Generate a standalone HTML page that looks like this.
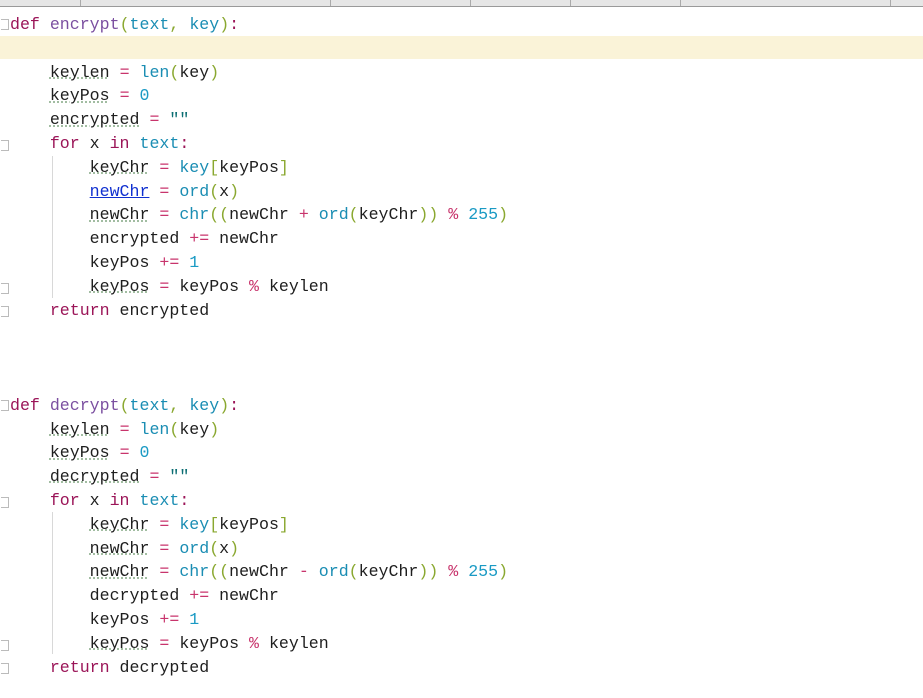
<!DOCTYPE html>
<html><head><meta charset="utf-8"><style>
body{margin:0;width:923px;height:698px;overflow:hidden;background:#fff;position:relative;font-family:"Liberation Mono","Noto Sans CJK SC",monospace;}
.top{position:absolute;left:0;top:0;width:923px;height:6px;background:#e6e6e6;border-bottom:1px solid #9a9a9a;}
.top i{position:absolute;top:0;width:1px;height:6px;background:#aaa}
.hl{position:absolute;left:0;top:36px;width:923px;height:23px;background:#faf3d8;}
.code{position:absolute;left:10px;top:13px;font-size:16.6px;line-height:23.8px;color:#1e1e1e;white-space:pre;}
.k{color:#9b1558}.f{color:#7b4fa0}.b{color:#1a8db3}.o{color:#c8346c}.n{color:#1a9ac4}.s{color:#0c6e73}.p{color:#8aa830}
.u{text-decoration:underline dotted #8fb08f}.a{color:#1030d0;text-decoration:underline solid #1030d0}
.g{position:absolute;left:52px;width:1px;background:#d8d8d8}
.fm{position:absolute;left:1px;width:7px;height:9px;border:1px solid #bbb;border-left:none;background:#fff}
</style></head><body>
<div class="top"><i style="left:80px"></i><i style="left:330px"></i><i style="left:470px"></i><i style="left:570px"></i><i style="left:680px"></i><i style="left:890px"></i></div>
<div class="hl"></div>
<div class="g" style="top:156px;height:142px"></div>
<div class="g" style="top:512px;height:142px"></div>
<div class="fm" style="top:19px"></div><div class="fm" style="top:140px"></div><div class="fm" style="top:283px"></div><div class="fm" style="top:306px"></div>
<div class="fm" style="top:400px"></div><div class="fm" style="top:497px"></div><div class="fm" style="top:640px"></div><div class="fm" style="top:663px"></div>
<div class="code"><span class="k">def</span> <span class="f">encrypt</span><span class="p">(</span><span class="b">text</span><span class="p">,</span> <span class="b">key</span><span class="p">)</span><span class="k">:</span>

    <span class="u">keylen</span> <span class="o">=</span> <span class="b">len</span><span class="p">(</span>key<span class="p">)</span>
    <span class="u">keyPos</span> <span class="o">=</span> <span class="n">0</span>
    <span class="u">encrypted</span> <span class="o">=</span> <span class="s">""</span>
    <span class="k">for</span> x <span class="k">in</span> <span class="b">text</span><span class="k">:</span>
        <span class="u">keyChr</span> <span class="o">=</span> <span class="b">key</span><span class="p">[</span>keyPos<span class="p">]</span>
        <span class="a">newChr</span> <span class="o">=</span> <span class="b">ord</span><span class="p">(</span>x<span class="p">)</span>
        <span class="u">newChr</span> <span class="o">=</span> <span class="b">chr</span><span class="p">((</span>newChr <span class="o">+</span> <span class="b">ord</span><span class="p">(</span>keyChr<span class="p">))</span> <span class="o">%</span> <span class="n">255</span><span class="p">)</span>
        encrypted <span class="o">+=</span> newChr
        keyPos <span class="o">+=</span> <span class="n">1</span>
        <span class="u">keyPos</span> <span class="o">=</span> keyPos <span class="o">%</span> keylen
    <span class="k">return</span> encrypted



<span class="k">def</span> <span class="f">decrypt</span><span class="p">(</span><span class="b">text</span><span class="p">,</span> <span class="b">key</span><span class="p">)</span><span class="k">:</span>
    <span class="u">keylen</span> <span class="o">=</span> <span class="b">len</span><span class="p">(</span>key<span class="p">)</span>
    <span class="u">keyPos</span> <span class="o">=</span> <span class="n">0</span>
    <span class="u">decrypted</span> <span class="o">=</span> <span class="s">""</span>
    <span class="k">for</span> x <span class="k">in</span> <span class="b">text</span><span class="k">:</span>
        <span class="u">keyChr</span> <span class="o">=</span> <span class="b">key</span><span class="p">[</span>keyPos<span class="p">]</span>
        <span class="u">newChr</span> <span class="o">=</span> <span class="b">ord</span><span class="p">(</span>x<span class="p">)</span>
        <span class="u">newChr</span> <span class="o">=</span> <span class="b">chr</span><span class="p">((</span>newChr <span class="o">-</span> <span class="b">ord</span><span class="p">(</span>keyChr<span class="p">))</span> <span class="o">%</span> <span class="n">255</span><span class="p">)</span>
        decrypted <span class="o">+=</span> newChr
        keyPos <span class="o">+=</span> <span class="n">1</span>
        <span class="u">keyPos</span> <span class="o">=</span> keyPos <span class="o">%</span> keylen
    <span class="k">return</span> decrypted</div>
</body></html>
